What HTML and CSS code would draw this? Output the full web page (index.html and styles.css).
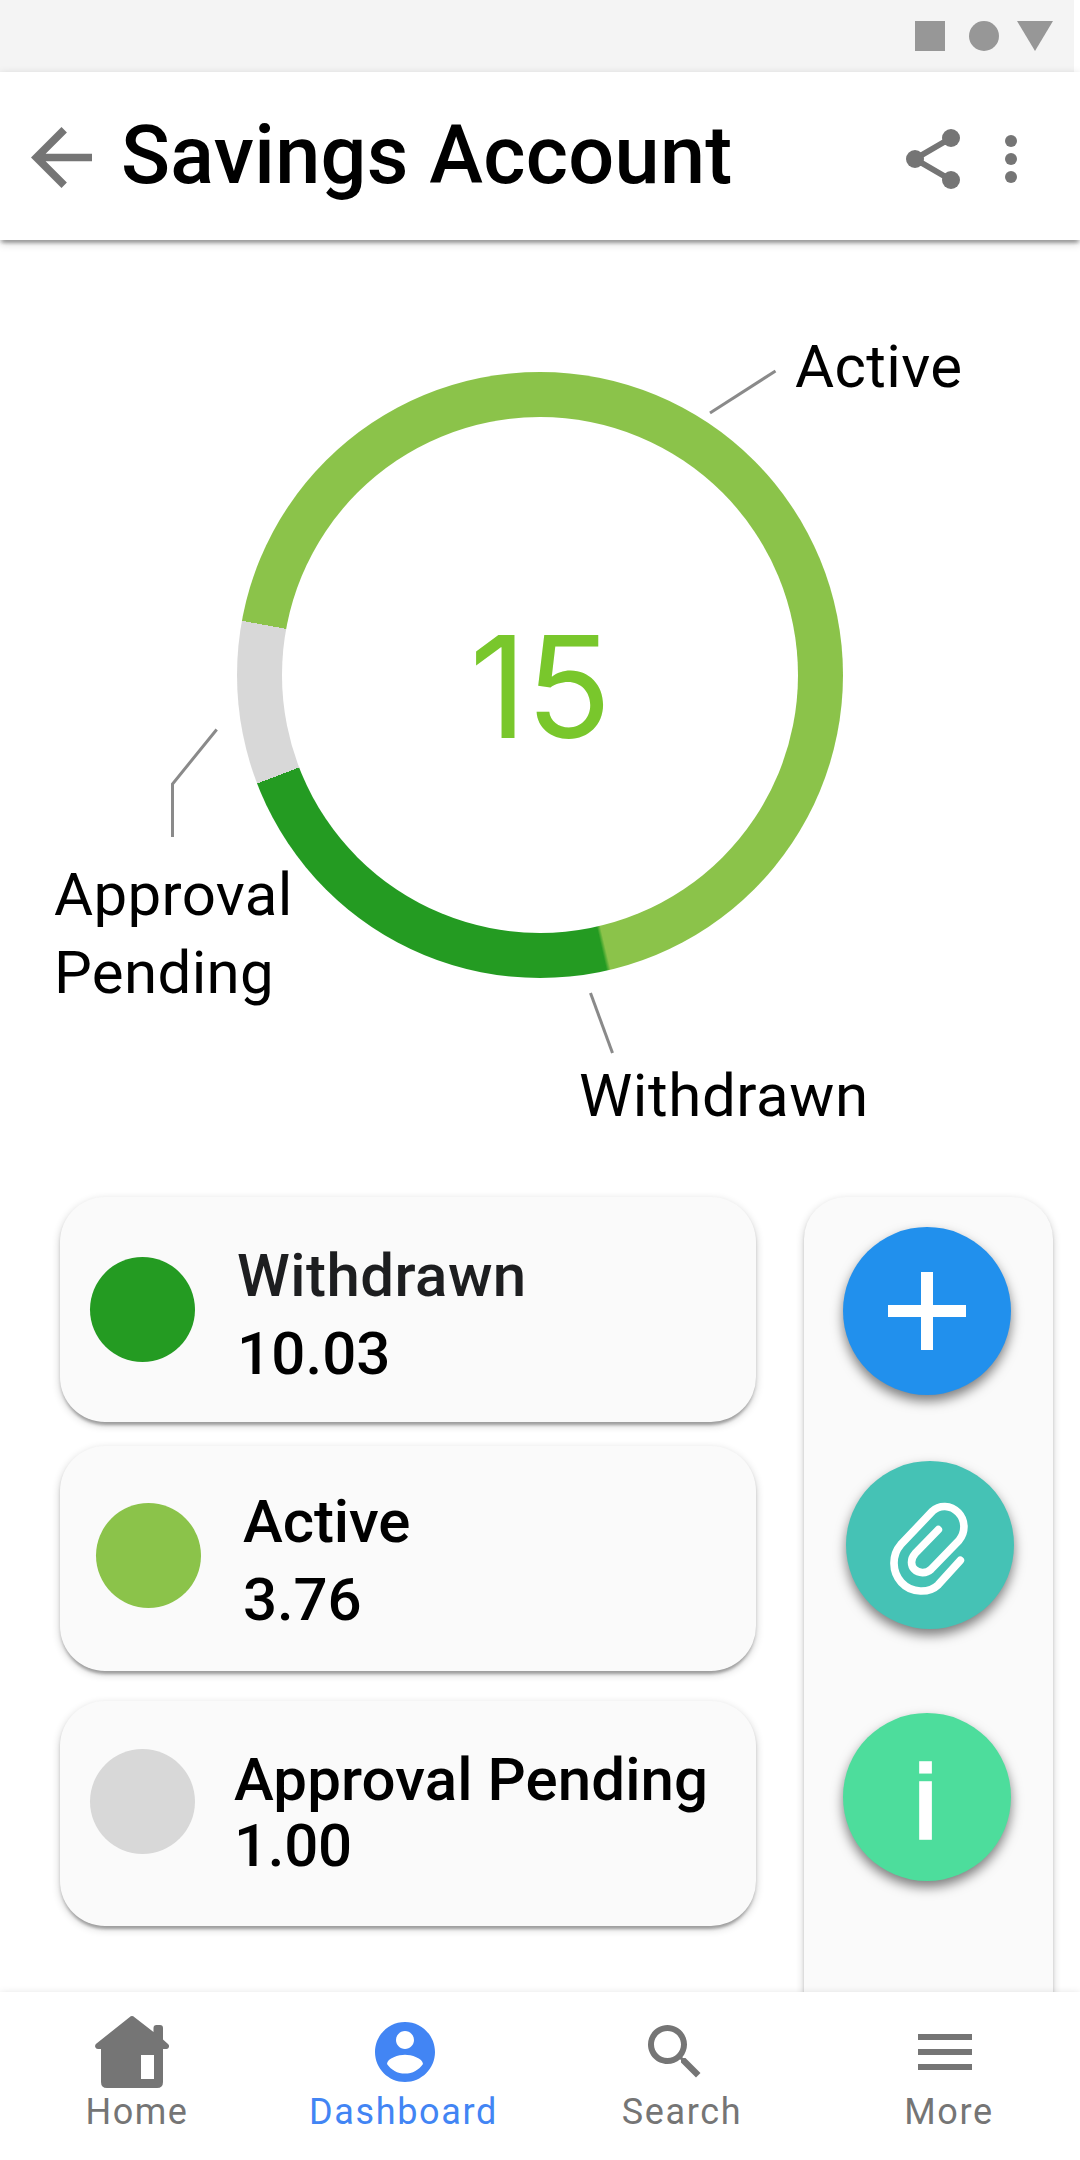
FILE: index.html
```html
<!DOCTYPE html>
<html lang="en">
<head>
<meta charset="utf-8">
<title>Savings Account</title>
<link rel="stylesheet" href="styles.css">
</head>
<body>
<div class="screen">
  <div class="status-bar">
    <svg width="138" height="30" viewBox="0 0 138 30" fill="#979797">
      <rect width="30" height="30"/>
      <circle cx="69" cy="15" r="15"/>
      <path d="M102 0h36l-18 30z"/>
    </svg>
  </div>

  <header class="app-bar">
    <svg class="back" width="61" height="61" viewBox="4 4 16 16" fill="#757575"><path d="M20 11H7.83l5.59-5.59L12 4l-8 8 8 8 1.41-1.41L7.83 13H20z"/></svg>
    <h1 class="title">Savings Account</h1>
    <svg class="share" width="54" height="60" viewBox="0 0 54 60" fill="#757575">
      <path d="M45 9L9 30l36 21" fill="none" stroke="#757575" stroke-width="6"/>
      <circle cx="9" cy="30" r="9"/><circle cx="45" cy="9" r="9"/><circle cx="45" cy="51" r="9"/>
    </svg>
    <svg class="overflow" width="12" height="48" viewBox="0 0 12 48" fill="#757575"><circle cx="6" cy="6" r="6"/><circle cx="6" cy="24" r="6"/><circle cx="6" cy="42" r="6"/></svg>
  </header>

  <section class="chart">
    <div class="ring"><div class="ring-hole"><span class="ring-value">15</span></div></div>
    <svg class="leaders" width="1080" height="930" viewBox="0 240 1080 930" fill="none" stroke="#8a8a8a" stroke-width="3">
      <path d="M710 413L775.5 371"/>
      <path d="M590.5 993L612.5 1053"/>
      <path d="M216.7 729.5L172.5 784V837"/>
    </svg>
    <span class="label label-active">Active</span>
    <span class="label label-pending">Approval<br>Pending</span>
    <span class="label label-withdrawn">Withdrawn</span>
  </section>

  <main class="content">
    <div class="cards">
      <article class="card card-withdrawn">
        <span class="dot"></span>
        <div class="card-text"><span class="card-name">Withdrawn</span><span class="amount">10.03</span></div>
      </article>
      <article class="card card-active">
        <span class="dot"></span>
        <div class="card-text"><span class="card-name">Active</span><span class="amount">3.76</span></div>
      </article>
      <article class="card card-pending">
        <span class="dot"></span>
        <div class="card-text"><span class="card-name">Approval Pending</span><span class="amount">1.00</span></div>
      </article>
    </div>
    <aside class="actions">
      <button class="fab fab-add" aria-label="Add">
        <svg width="78" height="78" viewBox="0 0 78 78" fill="#fff"><path d="M33 0h12v33h33v12H45v33H33V45H0V33h33z"/></svg>
      </button>
      <button class="fab fab-attach" aria-label="Attach">
        <svg width="168" height="168" viewBox="198 843 504 504" fill="none" stroke="#fff" stroke-width="23" stroke-linecap="round"><path d="M475 1049L405 1121C390 1138 393 1158 403 1168C417 1182 440 1180 453 1168L537 1081C557 1057 557 1021 535 998C512 974 478 974 457 994L362 1094C335 1125 335 1175 364 1207C395 1241 448 1240 475 1214L541 1141"/></svg>
      </button>
      <button class="fab fab-info" aria-label="Info">i</button>
    </aside>
  </main>

  <nav class="bottom-nav">
    <a class="tab tab-home">
      <span class="tab-icon"><svg width="74" height="72" viewBox="0 0 74 72" fill="#757575" fill-rule="evenodd"><path d="M34.5 1.2Q37-1 39.5 1.2L58.5 16V12Q58.5 9 61.5 9H65Q68 9 68 12V23.5L73 28Q74.5 29.5 74 31Q73.3 33 71.5 33H68V66Q68 72 62 72H12Q6 72 6 66V33H3Q.8 33 .2 31Q-.3 29 1.2 27.8ZM46 39V63H59V39Z"/></svg></span>
      <span class="tab-label">Home</span>
    </a>
    <a class="tab tab-dashboard">
      <span class="tab-icon"><svg width="60" height="60" viewBox="2 2 20 20" fill="#4285f4"><path d="M12 2C6.48 2 2 6.48 2 12s4.48 10 10 10 10-4.480 10-10S17.520 2 12 2zm0 3c1.660 0 3 1.340 3 3s-1.340 3-3 3-3-1.340-3-3 1.340-3 3-3zm0 14.200c-2.500 0-4.710-1.280-6-3.220.030-1.990 4-3.080 6-3.080 1.990 0 5.970 1.090 6 3.080-1.290 1.940-3.500 3.220-6 3.220z"/></svg></span>
      <span class="tab-label">Dashboard</span>
    </a>
    <a class="tab tab-search">
      <span class="tab-icon"><svg width="72" height="72" viewBox="0 0 24 24" fill="#757575"><path d="M15.500 14h-.790l-.280-.270C15.410 12.590 16 11.110 16 9.500 16 5.910 13.090 3 9.500 3S3 5.910 3 9.500 5.910 16 9.500 16c1.610 0 3.090-.590 4.230-1.570l.270.280v.790l5 4.990L20.490 19l-4.990-5zm-6 0C7.010 14 5 11.990 5 9.500S7.010 5 9.500 5 14 7.010 14 9.500 11.990 14 9.500 14z"/></svg></span>
      <span class="tab-label">Search</span>
    </a>
    <a class="tab tab-more">
      <span class="tab-icon"><svg width="54" height="36" viewBox="0 0 54 36" fill="#757575"><path d="M0 0h54v6H0zM0 15h54v6H0zM0 30h54v6H0z"/></svg></span>
      <span class="tab-label">More</span>
    </a>
  </nav>
</div>
</body>
</html>
```
FILE: styles.css
```css
* { box-sizing: border-box; }

body {
  margin: 0;
  background: #fff;
  color: #000;
  font-family: Roboto, "Liberation Sans", sans-serif;
}

.screen {
  width: 1080px;
  height: 2160px;
  display: flex;
  flex-direction: column;
  overflow: hidden;
}

.status-bar {
  width: 1074px;
  height: 72px;
  flex: none;
  display: flex;
  align-items: center;
  justify-content: flex-end;
  padding-right: 21px;
  background: #f4f4f4;
}

.app-bar,
.card,
.actions,
.bottom-nav {
  box-shadow: 0 6px 3px -3px rgba(0, 0, 0, .16), 0 3px 3px rgba(0, 0, 0, .14), 0 3px 9px rgba(0, 0, 0, .2);
}

.app-bar {
  height: 168px;
  flex: none;
  display: flex;
  align-items: flex-start;
  padding: 0 63px 0 31px;
  background: #fff;
}

.back { margin-top: 55px; }

.title {
  margin: 36px 0 0 29px;
  font-size: 81px;
  font-weight: 500;
  line-height: 96px;
  letter-spacing: .3px;
}

.share { margin: 57px 0 0 auto; }
.overflow { margin: 63px 0 0 45px; }

.chart {
  position: relative;
  height: 930px;
  flex: none;
  padding-top: 132px;
}

.ring {
  width: 606px;
  height: 606px;
  margin: 0 auto;
  padding: 45px;
  border-radius: 50%;
  background: conic-gradient(#8bc34a 166.500deg, #249b22 167.300deg 249deg, #d8d8d8 249deg 280.300deg, #8bc34a 280.300deg);
}

.ring-hole {
  height: 100%;
  display: flex;
  align-items: center;
  justify-content: center;
  padding-top: 24px;
  border-radius: 50%;
  background: #fff;
}

.ring-value {
  font-family: Inter, "Liberation Sans", sans-serif;
  font-size: 141px;
  line-height: 160px;
  letter-spacing: -1px;
  color: #79c72c;
}

/* Callouts placed around the ring */
.leaders { position: absolute; left: 0; top: 0; }

.label {
  position: absolute;
  font-size: 60px;
  line-height: 78px;
  letter-spacing: .35px;
}

.label-active { left: 795px; top: 88px; }
.label-pending { left: 54px; top: 616px; }
.label-withdrawn { left: 579px; top: 817px; letter-spacing: .6px; }

.content {
  flex: 1;
  min-height: 0;
  display: flex;
  gap: 48px;
  padding: 27px 27px 0 60px;
  overflow: hidden;
}

.cards { width: 696px; }

.card {
  height: 225px;
  display: flex;
  align-items: flex-start;
  border-radius: 45px;
  background: #fafafa;
}

.dot {
  width: 105px;
  height: 105px;
  flex: none;
  border-radius: 50%;
}

.card-text {
  display: flex;
  flex-direction: column;
  font-size: 60px;
  font-weight: 500;
  line-height: 78px;
  letter-spacing: .1px;
}

.card-withdrawn .dot { margin: 60px 0 0 30px; background: #249b22; }
.card-withdrawn .card-text { margin: 40px 0 0 42px; }
.card-withdrawn .card-name { color: #1d1e20; letter-spacing: .45px; }

.card-active { margin-top: 24px; }
.card-active .dot { margin: 57px 0 0 36px; background: #8bc34a; }
.card-active .card-text { margin: 37px 0 0 42px; letter-spacing: -.1px; }

.card-pending { margin-top: 30px; }
.card-pending .dot { margin: 48px 0 0 30px; background: #d8d8d8; }
.card-pending .card-text { margin: 46px 0 0 39px; line-height: 66px; }
.card-pending .amount { letter-spacing: -.3px; }

.actions {
  width: 249px;
  height: 860px;
  flex: none;
  padding: 30px 0 0 39px;
  border-radius: 42px;
  background: #fafafa;
}

.fab {
  width: 168px;
  height: 168px;
  display: flex;
  align-items: center;
  justify-content: center;
  padding: 0;
  border: 0;
  border-radius: 50%;
  color: #fff;
  box-shadow: 0 6px 12px rgba(0, 0, 0, .5);
}

.fab-add { background: #2190ed; }
.fab-attach { margin: 66px 0 0 3px; background: #45c2b5; }

.fab-info {
  margin-top: 84px;
  padding: 9px 3px 0 0;
  background: #4ddd9c;
  font: 400 104px/120px "Liberation Sans", sans-serif;
  -webkit-text-stroke: 3.5px #fff;
}

.bottom-nav {
  position: relative;
  height: 168px;
  flex: none;
  display: grid;
  grid-template-columns: repeat(4, 1fr);
  background: #fff;
}

.tab {
  display: flex;
  flex-direction: column;
  align-items: center;
  padding-top: 15px;
  color: #757575;
}

.tab-icon {
  height: 90px;
  display: flex;
  align-items: center;
}

.tab-label {
  font-size: 36px;
  line-height: 42px;
  letter-spacing: 1.650px;
  margin-top: -6px;
}

.tab-home .tab-icon { padding-right: 6px; }
.tab-home .tab-label { padding-left: 4px; letter-spacing: 1.5px; }
.tab-dashboard { color: #4285f4; }
.tab-dashboard .tab-label { padding-right: 3px; }
.tab-search .tab-label { padding-left: 14px; }
.tab-more .tab-label { padding-left: 8px; }
```
